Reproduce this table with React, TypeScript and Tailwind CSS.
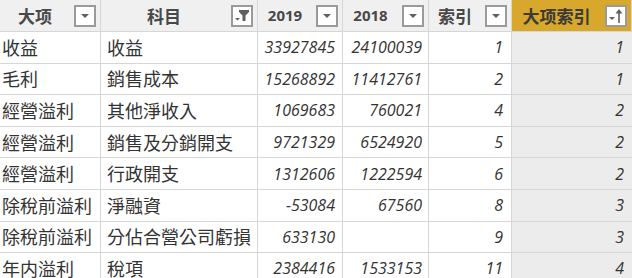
import React from "react";

const rows: [string, string, string, string, string, string][] = [
  ["收益", "收益", "33927845", "24100039", "1", "1"],
  ["毛利", "銷售成本", "15268892", "11412761", "2", "1"],
  ["經營溢利", "其他淨收入", "1069683", "760021", "4", "2"],
  ["經營溢利", "銷售及分銷開支", "9721329", "6524920", "5", "2"],
  ["經營溢利", "行政開支", "1312606", "1222594", "6", "2"],
  ["除稅前溢利", "淨融資", "-53084", "67560", "8", "3"],
  ["除稅前溢利", "分佔合營公司虧損", "633130", "", "9", "3"],
  ["年内溢利", "稅項", "2384416", "1533153", "11", "4"],
];

const cjk = "font-['Microsoft_JhengHei','Noto_Sans_CJK_TC','Noto_Sans_CJK_SC',sans-serif]";
const num = "font-['Open_Sans','Noto_Sans',sans-serif] italic";

function DropIcon() {
  return (
    <svg width="10" height="6" viewBox="0 0 10 6">
      <path d="M1 1 H9 L5 5 Z" fill="#606060" />
    </svg>
  );
}

function FilterIcon() {
  return (
    <svg width="16" height="16" viewBox="0 0 16 16">
      <path d="M1 10 H6 L3.5 12.5 Z" fill="#606060" />
      <path d="M5 2 H15 V4 L11.5 7.5 V13 H8.5 V7.5 L5 4 Z" fill="#606060" />
    </svg>
  );
}

function SortIcon() {
  return (
    <svg width="16" height="18" viewBox="0 0 16 18">
      <path d="M1 10 H7 L4 13 Z" fill="#606060" />
      <path d="M11 2 L7.5 6.5 H10.2 V16 H11.8 V6.5 H14.5 Z" fill="#606060" />
    </svg>
  );
}

function Btn({ children }: { children: React.ReactNode }) {
  return (
    <div className="w-[22px] h-[22px] shrink-0 bg-white border-2 border-[#9a9a9a] flex items-center justify-center mr-[4px]">
      {children}
    </div>
  );
}

function Head({ label, icon, gold, isNum }: { label: string; icon: React.ReactNode; gold?: boolean; isNum?: boolean }) {
  return (
    <div
      className={`h-[32px] flex items-center border-r border-b border-[#d6d6d6] ${gold ? "bg-[#d7a82b]" : "bg-[#f0f0f0]"}`}
    >
      <div
        className={`flex-1 text-center font-bold ${gold ? "text-[#3a3a3a]" : "text-[#484848]"} ${
          isNum ? "font-['Open_Sans',sans-serif] text-[15px]" : `${cjk} text-[17px]`
        } pr-[4px]`}
      >
        {label}
      </div>
      <Btn>{icon}</Btn>
    </div>
  );
}

export default function App() {
  return (
    <div className="w-[632px] h-[278px] overflow-hidden bg-white">
      <div className="grid grid-cols-[101px_157px_85px_86px_83px_120px]">
        <Head label="大项" icon={<DropIcon />} />
        <Head label="科目" icon={<FilterIcon />} />
        <Head label="2019" icon={<DropIcon />} isNum />
        <Head label="2018" icon={<DropIcon />} isNum />
        <Head label="索引" icon={<DropIcon />} />
        <Head label="大项索引" icon={<SortIcon />} gold />
        {rows.map((r, i) => (
          <React.Fragment key={i}>
            <div className={`h-[31.6px] flex items-center pl-[2px] border-r border-b border-[#d6d6d6] text-[18px] text-[#333] ${cjk} whitespace-nowrap`}>
              {r[0]}
            </div>
            <div className={`h-[31.6px] flex items-center pl-[6px] border-r border-b border-[#d6d6d6] text-[18px] text-[#333] ${cjk} whitespace-nowrap`}>
              {r[1]}
            </div>
            <div className={`h-[31.6px] flex items-center justify-end pr-[7px] border-r border-b border-[#d6d6d6] text-[16px] text-[#333] ${num}`}>
              {r[2]}
            </div>
            <div className={`h-[31.6px] flex items-center justify-end pr-[6px] border-r border-b border-[#d6d6d6] text-[16px] text-[#333] ${num}`}>
              {r[3]}
            </div>
            <div className={`h-[31.6px] flex items-center justify-end pr-[8px] border-r border-b border-[#d6d6d6] text-[16px] text-[#333] ${num}`}>
              {r[4]}
            </div>
            <div className={`h-[31.6px] flex items-center justify-end pr-[8px] border-b border-[#d6d6d6] bg-[#ececec] text-[16px] text-[#333] ${num}`}>
              {r[5]}
            </div>
          </React.Fragment>
        ))}
      </div>
    </div>
  );
}
